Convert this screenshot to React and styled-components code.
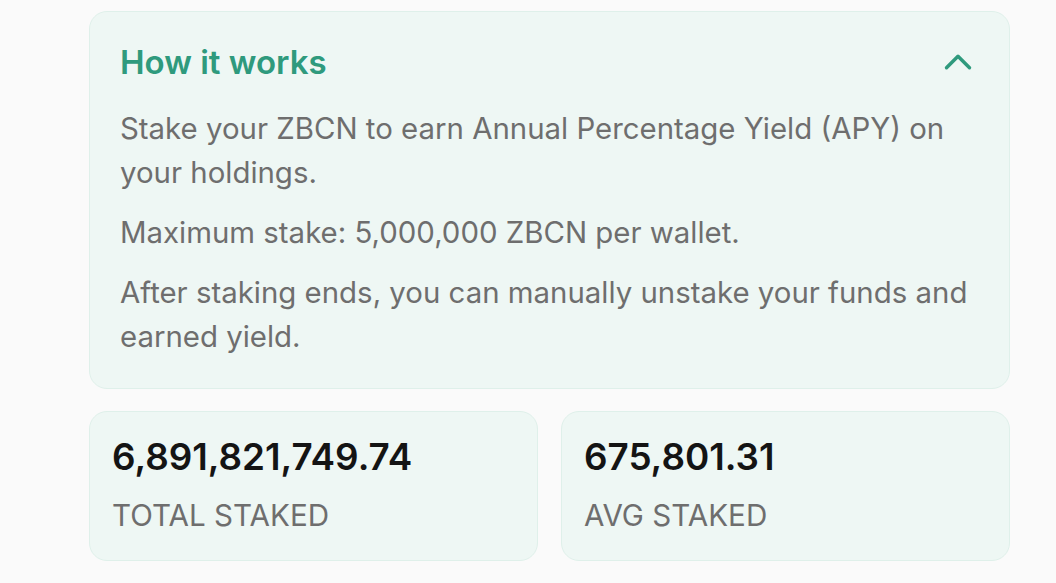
import React from 'react'
import styled, { createGlobalStyle } from 'styled-components'
import { ChevronUp } from 'lucide-react'

const GlobalStyle = createGlobalStyle`
    body {
        margin: 0;
        background: #fafafa;
        font-family: Inter, "Noto Sans", sans-serif;
    }
`;

const Page = styled.div`
    padding: 11px 46px 0 89px;
    display: flex;
    flex-direction: column;
    gap: 22px;
`;

const Panel = styled.section`
    background: #eef7f4;
    border: 1px solid #dff0ea;
    border-radius: 18px;
    padding: 30px 30px 29px 30px;
`;

const Header = styled.div`
    display: flex;
    align-items: center;
    justify-content: space-between;
    margin-bottom: 25px;
`;

const Title = styled.h3`
    margin: 0;
    font-size: 33px;
    font-weight: 600;
    color: #2f9a7d;
    line-height: 40px;
`;

const Toggle = styled.button`
    border: 0;
    background: none;
    padding: 0;
    margin: -10px -2px -10px 0;
    color: #2f9a7d;
    display: flex;
`;

const Text = styled.p`
    margin: 0 0 16px;
    font-size: 29.4px;
    line-height: 44px;
    color: #6e6e6e;

    &:last-child {
        margin-bottom: 0;
    }
`;

const Stats = styled.div`
    display: grid;
    grid-template-columns: 1fr 1fr;
    gap: 23px;
`;

const StatCard = styled.div`
    background: #eef7f4;
    border: 1px solid #dff0ea;
    border-radius: 18px;
    padding: 23px 22px 27px;
`;

const Value = styled.div`
    font-size: 36.8px;
    font-weight: 600;
    color: #141414;
    line-height: 44px;
`;

const Label = styled.div`
    margin-top: 18px;
    font-size: 29.6px;
    color: #6e6e6e;
    line-height: 36px;
`;

const stats = [
    { value: '6,891,821,749.74', label: 'TOTAL STAKED' },
    { value: '675,801.31', label: 'AVG STAKED' }
];

export default function App() {
    return (
        <>
            <GlobalStyle />
            <Page>
                <Panel>
                    <Header>
                        <Title>How it works</Title>
                        <Toggle aria-label="Collapse">
                            <ChevronUp size={46} strokeWidth={1.8} />
                        </Toggle>
                    </Header>
                    <Text>Stake your ZBCN to earn Annual Percentage Yield (APY) on your holdings.</Text>
                    <Text>Maximum stake: 5,000,000 ZBCN per wallet.</Text>
                    <Text>After staking ends, you can manually unstake your funds and earned yield.</Text>
                </Panel>
                <Stats>
                    {stats.map((s) => (
                        <StatCard key={s.label}>
                            <Value>{s.value}</Value>
                            <Label>{s.label}</Label>
                        </StatCard>
                    ))}
                </Stats>
            </Page>
        </>
    );
}
